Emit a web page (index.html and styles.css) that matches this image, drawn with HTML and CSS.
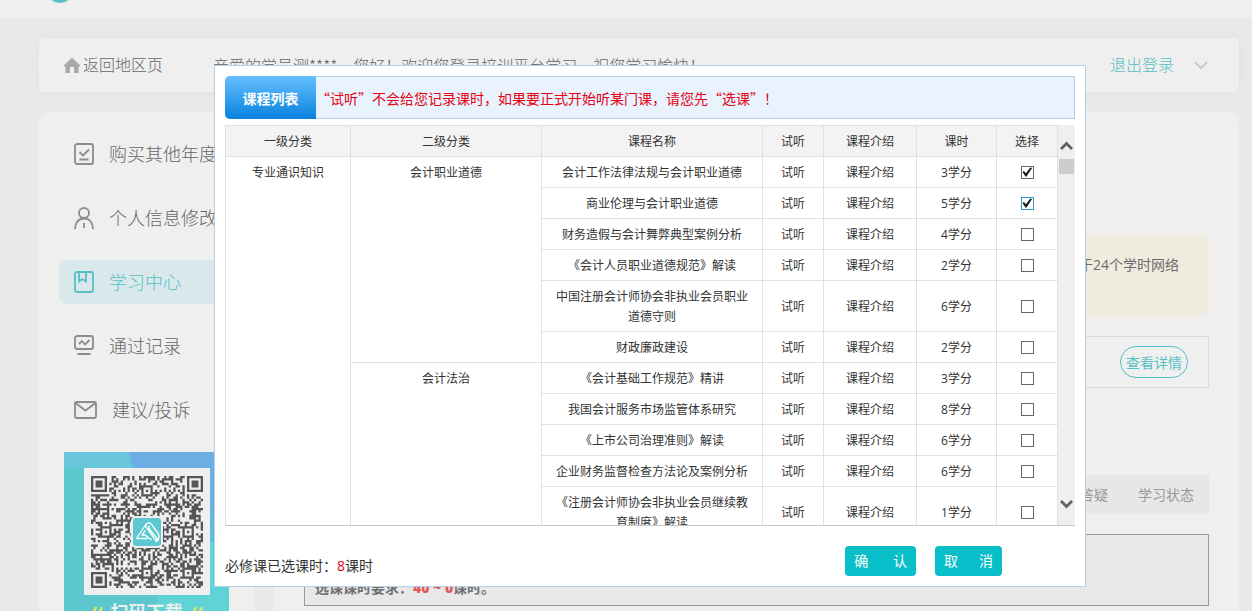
FILE: index.html
```
<!DOCTYPE html>
<html lang="zh-CN">
<head>
<meta charset="utf-8">
<title>学习中心</title>
<link rel="stylesheet" href="styles.css">
</head>
<body>
<header class="site-header"><span class="site-logo"></span></header>
<div class="page">
  <div class="topbar">
    <a class="home-link" href="#">
      <svg width="18" height="17" viewBox="0 0 18 17"><path d="M9 0.5 17.2 8.6c.5.6.1 1-.4 1H15.6V16H11v-5.2a1 1 0 0 0-1-1H8a1 1 0 0 0-1 1V16H2.4V9.600H1.200c-.6 0-.9-.5-.4-1z" fill="#a8a8a8"/></svg>
      返回地区页
    </a>
    <p class="greeting">亲爱的学员测****，您好！欢迎您登录培训平台学习，祝您学习愉快！</p>
    <a class="logout" href="#">退出登录
      <svg width="14" height="9" viewBox="0 0 14 9"><path d="M1 1l6 6 6-6" fill="none" stroke="#c9c9c9" stroke-width="1.8"/></svg>
    </a>
  </div>
  <div class="columns">
    <aside class="sidebar">
      <nav class="menu">
        <a class="menu-item" href="#">
          <svg width="20" height="22" viewBox="0 0 20 22"><rect x="1" y="1" width="18" height="20" rx="2"/><path d="M5.500 9l3.500 3.500L15 6.500M5.500 16.500h9"/></svg>购买其他年度</a>
        <a class="menu-item" href="#">
          <svg width="20" height="22" viewBox="0 0 20 22"><circle cx="10" cy="6" r="5"/><path d="M1 22c0-6.500 3.500-10.500 9-10.500S19 15.500 19 22M10 16v5"/></svg>个人信息修改</a>
        <a class="menu-item active" href="#">
          <svg width="20" height="22" viewBox="0 0 20 22"><rect x="1" y="1" width="18" height="20" rx="2"/><path d="M5 1v9.500l3.500-2.500 3.500 2.500V1"/></svg>学习中心</a>
        <a class="menu-item" href="#">
          <svg width="20" height="22" viewBox="0 0 20 22"><rect x="1" y="1" width="18" height="13" rx="2"/><path d="M5 9l3-3 3 3.500L15.500 5M3.500 19h13"/></svg>通过记录</a>
        <a class="menu-item" href="#">
          <svg width="23" height="18" viewBox="0 0 23 18"><rect x="1" y="1" width="21" height="16" rx="1.500"/><path d="M1.500 2l10 7.500 10-7.500"/></svg>建议/投诉</a>
      </nav>
      <div class="app-card">
        <div class="qr-frame">
          <svg class="qr" id="qr" viewBox="0 0 49 49" role="img" aria-label="二维码"></svg>
          <svg class="qr-logo" viewBox="0 0 32 32"><rect x="1" y="1" width="30" height="30" rx="4" fill="#5cc8cf" stroke="#efefef" stroke-width="2"/><path d="M15.500 7.500 5.500 22.500h11M15.500 7.500c2-.8 4-.6 5 .8l7 9.700c1.500 2.500 0 5.500-2.500 6M15.500 7.500c-1 1.500-.8 3 .2 4.200L25.500 25.500l2.500-2M18.500 9.500l-1 2.500 9 11M14.500 14l-3.500 5h3l6.500 5" fill="none" stroke="#fff" stroke-width="1.300" stroke-linejoin="round"/></svg>
        </div>
        <p class="app-caption">
          <svg width="12" height="14" viewBox="0 0 12 14"><path d="M5 2 1 11M11 2 7 11"/></svg>
          扫码下载
          <svg width="12" height="14" viewBox="0 0 12 14"><path d="M5 2 1 11M11 2 7 11"/></svg>
        </p>
      </div>
    </aside>
    <main class="main">
      <div class="notice">于24个学时网络</div>
      <div class="detail-row"><button class="detail-btn" type="button">查看详情</button></div>
      <div class="tabs"><span>答疑</span><span>学习状态</span></div>
      <div class="requirement"><p>选课课时要求：<b>40 ~ 0</b>课时。</p></div>
    </main>
  </div>
</div>

<section class="dialog" role="dialog" aria-label="课程列表">
  <div class="dialog-head">
    <h2>课程列表</h2>
    <p>“试听”不会给您记录课时，如果要正式开始听某门课，请您先“选课”！</p>
  </div>
  <div class="list">
    <div class="list-body">
      <table class="courses">
        <colgroup><col class="c-first"><col class="c-second"><col class="c-name"><col class="c-try"><col class="c-intro"><col class="c-hours"><col class="c-pick"></colgroup>
        <thead>
          <tr><th>一级分类</th><th>二级分类</th><th>课程名称</th><th>试听</th><th>课程介绍</th><th>课时</th><th>选择</th></tr>
        </thead>
        <tbody>
          <tr><td class="group" rowspan="11">专业通识知识</td><td class="group" rowspan="6">会计职业道德</td><td>会计工作法律法规与会计职业道德</td><td><a href="#">试听</a></td><td><a href="#">课程介绍</a></td><td>3学分</td><td><input type="checkbox" aria-label="会计工作法律法规与会计职业道德" checked></td></tr>
          <tr><td>商业伦理与会计职业道德</td><td><a href="#">试听</a></td><td><a href="#">课程介绍</a></td><td>5学分</td><td><input class="current" type="checkbox" aria-label="商业伦理与会计职业道德" checked></td></tr>
          <tr><td>财务造假与会计舞弊典型案例分析</td><td><a href="#">试听</a></td><td><a href="#">课程介绍</a></td><td>4学分</td><td><input type="checkbox" aria-label="财务造假与会计舞弊典型案例分析"></td></tr>
          <tr><td>《会计人员职业道德规范》解读</td><td><a href="#">试听</a></td><td><a href="#">课程介绍</a></td><td>2学分</td><td><input type="checkbox" aria-label="《会计人员职业道德规范》解读"></td></tr>
          <tr><td>中国注册会计师协会非执业会员职业道德守则</td><td><a href="#">试听</a></td><td><a href="#">课程介绍</a></td><td>6学分</td><td><input type="checkbox" aria-label="中国注册会计师协会非执业会员职业道德守则"></td></tr>
          <tr><td>财政廉政建设</td><td><a href="#">试听</a></td><td><a href="#">课程介绍</a></td><td>2学分</td><td><input type="checkbox" aria-label="财政廉政建设"></td></tr>
          <tr><td class="group" rowspan="5">会计法治</td><td>《会计基础工作规范》精讲</td><td><a href="#">试听</a></td><td><a href="#">课程介绍</a></td><td>3学分</td><td><input type="checkbox" aria-label="《会计基础工作规范》精讲"></td></tr>
          <tr><td>我国会计服务市场监管体系研究</td><td><a href="#">试听</a></td><td><a href="#">课程介绍</a></td><td>8学分</td><td><input type="checkbox" aria-label="我国会计服务市场监管体系研究"></td></tr>
          <tr><td>《上市公司治理准则》解读</td><td><a href="#">试听</a></td><td><a href="#">课程介绍</a></td><td>6学分</td><td><input type="checkbox" aria-label="《上市公司治理准则》解读"></td></tr>
          <tr><td>企业财务监督检查方法论及案例分析</td><td><a href="#">试听</a></td><td><a href="#">课程介绍</a></td><td>6学分</td><td><input type="checkbox" aria-label="企业财务监督检查方法论及案例分析"></td></tr>
          <tr><td>《注册会计师协会非执业会员继续教育制度》解读</td><td><a href="#">试听</a></td><td><a href="#">课程介绍</a></td><td>1学分</td><td><input type="checkbox" aria-label="《注册会计师协会非执业会员继续教育制度》解读"></td></tr>
        </tbody>
      </table>
    </div>
    <div class="scrollbar">
      <svg width="13" height="10" viewBox="0 0 13 10"><path d="M1 8l5.500-5.500L12 8"/></svg>
      <span class="thumb"></span>
      <svg class="down" width="13" height="10" viewBox="0 0 13 10"><path d="M1 2l5.500 5.500L12 2"/></svg>
    </div>
  </div>
  <div class="dialog-foot">
    <p>必修课已选课时：<em>8</em>课时</p>
    <div class="actions">
      <button type="button">确&emsp;&ensp;&nbsp;认</button>
      <button type="button">取&emsp;&ensp;消</button>
    </div>
  </div>
</section>
<script src="qr.js"></script>
</body>
</html>
```
FILE: styles.css
```
* { box-sizing: border-box; }

body {
  margin: 0;
  height: 100vh;
  overflow: hidden;
  background: #e9e9e9;
  color: #333;
  font-family: "Open Sans", "Noto Sans CJK SC", sans-serif;
  font-size: 14px;
  line-height: 20px;
}

p, h2 { margin: 0; }
a { color: inherit; text-decoration: none; }
button { font: inherit; cursor: pointer; }
svg { flex: none; }

.site-header {
  height: 18px;
  padding: 0 46px 15px;
  display: flex;
  align-items: flex-end;
  overflow: hidden;
  background: #efefef;
}

.site-logo {
  flex: none;
  width: 28px;
  height: 28px;
  border-radius: 50%;
  background: #5cbfc4;
}

.page { padding: 20px 13px 0 39px; }

.topbar {
  display: flex;
  align-items: center;
  height: 54px;
  padding: 0 31px 0 24px;
  border-radius: 5px;
  background: #efefef;
  box-shadow: 0 0 16px rgba(0, 0, 0, 0.04);
  color: #666;
  font-size: 16px;
  font-weight: 300;
  line-height: 24px;
}

.home-link {
  display: flex;
  align-items: center;
  gap: 2px;
  margin-right: 50px;
}

.greeting {
  flex: 1;
  font-family: "Noto Sans CJK SC", sans-serif;
  white-space: nowrap;
}

.logout {
  display: flex;
  align-items: center;
  gap: 20px;
  color: #56bfc6;
}

.columns {
  display: flex;
  gap: 20px;
  height: calc(100vh - 112px);
  margin-top: 20px;
}

.sidebar, .main {
  overflow: hidden;
  border-radius: 10px 10px 0 0;
  background: #efefef;
}

.sidebar { flex: none; width: 215px; padding: 20px 20px 0; }

.menu { display: flex; flex-direction: column; gap: 20px; }

.menu-item {
  display: flex;
  align-items: center;
  gap: 15px;
  height: 44px;
  padding-left: 15px;
  border-radius: 8px;
  color: #666;
  font-size: 18px;
  font-weight: 300;
  line-height: 24px;
  white-space: nowrap;
}

.menu-item svg { fill: none; stroke: #8c8c8c; stroke-width: 1.8; }
.menu-item.active { background: #d9e9eb; color: #56bfc6; }
.menu-item.active svg { stroke: #56bfc6; }

.app-card {
  height: 200px;
  margin: 20px 5px 0;
  padding: 16px 20px;
  background:
    linear-gradient(75deg, transparent 42%, #6aaee4 42%) top / 100% 30px no-repeat,
    linear-gradient(#6cc3e0, #66c8d8) top / 100% 16px no-repeat,
    linear-gradient(#6aaee4, #60bcd8) 100% 20px / 20px 70px no-repeat,
    linear-gradient(100deg, #5cc8cd 60%, #5fd4d6 60%);
}

.qr-frame {
  display: grid;
  place-items: center;
  width: 126px;
  height: 127px;
  background: #efefef;
}

.qr, .qr-logo { grid-area: 1 / 1; }
.qr { width: 112px; height: 112px; fill: #555; }
.qr-logo { width: 32px; height: 32px; }

.app-caption {
  display: flex;
  align-items: center;
  justify-content: center;
  gap: 8px;
  margin-top: 5px;
  color: #efefef;
  font-size: 18px;
  font-weight: 700;
  line-height: 24px;
  white-space: nowrap;
}

.app-caption svg { fill: none; stroke: #e0e36a; stroke-width: 2.5; }

.main {
  flex: 1;
  padding: 123px 30px 0;
  color: #6b6b6b;
}

.notice {
  height: 81px;
  padding: 20px 30px;
  border-radius: 10px;
  background: #efebdd;
  text-align: right;
}

.detail-row {
  display: flex;
  align-items: center;
  justify-content: flex-end;
  height: 52px;
  margin-top: 20px;
  padding: 0 20px;
  border: 1px solid #d9dbde;
}

.detail-btn {
  height: 32px;
  padding: 2px 5px 0;
  border: 1px solid #56bfc6;
  border-radius: 16px;
  background: none;
  color: #56bfc6;
}

.tabs {
  display: flex;
  align-items: center;
  justify-content: flex-end;
  gap: 30px;
  height: 39px;
  margin-top: 87px;
  padding: 0 15px;
  background: #e7e7e7;
  color: #999;
}

.requirement {
  display: flex;
  align-items: flex-end;
  height: 72px;
  margin-top: 20px;
  padding: 7px 10px;
  border: 1px solid #999;
  background: #e8e8e8;
  color: #707070;
  font-weight: 700;
}

.requirement b { color: #de5b5b; }

.dialog {
  position: absolute;
  top: 65px;
  left: 214px;
  right: 166px;
  padding: 10px;
  border: 1px solid #b8cfe8;
  background: #fff;
}

.dialog-head {
  display: flex;
  height: 43px;
  border: 1px solid #b5d0ea;
  border-left: 0;
  border-radius: 5px 0 0 5px;
  background: #e8f3fe;
  line-height: 43px;
}

.dialog-head h2 {
  flex: none;
  width: 91px;
  margin: -1px 0;
  border-radius: 5px 0 0 5px;
  background: linear-gradient(#66c0ff, #0782de);
  color: #fff;
  font-size: 14px;
  line-height: 45px;
  text-align: center;
}

.dialog-head p {
  color: #e60012;
  font-family: "Noto Sans CJK SC", sans-serif;
}

.list {
  display: flex;
  height: 401px;
  margin-top: 6px;
  border-bottom: 1px solid #c4c8cb;
}

.list-body { flex: 1; overflow: hidden; }

.courses {
  width: 100%;
  table-layout: fixed;
  border-collapse: collapse;
  font-size: 12px;
  text-align: center;
}

.courses th, .courses td {
  padding: 6px 10px 4px;
  border: 1px solid #e0e0e0;
  font-weight: 400;
}

.courses th { background: #f3f3f3; }
.courses .group { vertical-align: top; }
.courses td:last-child { padding: 5px 10px; }
.c-first { width: 125px; }
.c-second { width: 191px; }
.c-name { width: 221px; }
.c-try { width: 61px; }
.c-intro { width: 93px; }
.c-hours { width: 80px; }
.c-pick { width: 61px; }

.courses input {
  display: block;
  appearance: none;
  width: 13px;
  height: 13px;
  margin: 0 auto;
  border: 1px solid #666;
  background: #fff;
}

.courses input.current { border-color: #2a9fd0; }

.courses input:checked::before {
  content: "";
  display: block;
  width: 11px;
  height: 11px;
  background: #1c1c1c;
  clip-path: polygon(9% 50%, 23% 42%, 40% 62%, 80% 8%, 96% 14%, 46% 92%, 36% 92%);
}

.scrollbar {
  display: flex;
  flex-direction: column;
  align-items: center;
  width: 17px;
  padding: 16px 0;
  background: #efefef;
}

.scrollbar svg { fill: none; stroke: #606060; stroke-width: 2.8; }
.scrollbar .down { margin-top: auto; }
.thumb { width: 15px; height: 15px; margin-top: 8px; background: #cdcdcd; }

.dialog-foot {
  display: flex;
  align-items: flex-end;
  justify-content: space-between;
  height: 30px;
  margin-top: 20px;
  padding-right: 73px;
}

.dialog-foot em { color: #e60012; font-style: normal; }
.actions { display: flex; gap: 19px; }

.actions button {
  height: 30px;
  padding: 0 9px;
  border: 0;
  border-radius: 4px;
  background: #08bec8;
  color: #fff;
}
```
FILE: qr.js
```
(function () {
  var size = 49;
  var finders = [[0, 0], [42, 0], [0, 42]];
  var marks = [[24, 6], [6, 24], [42, 24], [24, 42], [42, 42]];
  var seed = 20240;

  function random() {
    seed = (seed * 16807) % 2147483647;
    return seed / 2147483647;
  }

  function ring(distance, outer) {
    return outer === 4 ? distance !== 2 && distance !== 4 : distance !== 1;
  }

  function isDark(x, y) {
    var noise = random() < 0.5;
    var i, d;
    for (i = 0; i < finders.length; i++) {
      d = Math.max(Math.abs(x - finders[i][0] - 3), Math.abs(y - finders[i][1] - 3));
      if (d <= 4) return ring(d, 4);
    }
    for (i = 0; i < marks.length; i++) {
      d = Math.max(Math.abs(x - marks[i][0]), Math.abs(y - marks[i][1]));
      if (d <= 2) return ring(d, 2);
    }
    if (x === 6 || y === 6) return (x + y) % 2 === 0;
    return noise;
  }

  var path = "";
  for (var y = 0; y < size; y++) {
    for (var x = 0; x < size; x++) {
      if (isDark(x, y)) path += "M" + x + " " + y + "h1v1h-1z";
    }
  }
  var shape = document.createElementNS("http://www.w3.org/2000/svg", "path");
  shape.setAttribute("d", path);
  document.getElementById("qr").appendChild(shape);
})();
```
